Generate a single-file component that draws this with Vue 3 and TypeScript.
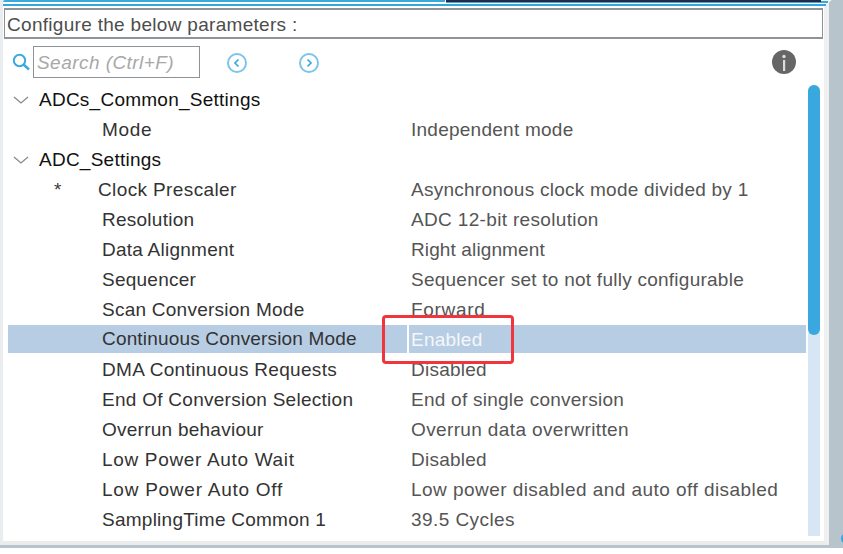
<script setup lang="ts">
interface Row {
  name: string
  value?: string
  kind?: 'group' | 'star'
  sel?: boolean
  nameTrack?: number
  valueTrack?: number
}
const rows: Row[] = [
  { name: 'ADCs_Common_Settings', kind: 'group' },
  { name: 'Mode', value: 'Independent mode', nameTrack: 0.7 },
  { name: 'ADC_Settings', kind: 'group' },
  { name: 'Clock Prescaler', value: 'Asynchronous clock mode divided by 1', kind: 'star', nameTrack: 0.38 },
  { name: 'Resolution', value: 'ADC 12-bit resolution', valueTrack: 0.34 },
  { name: 'Data Alignment', value: 'Right alignment', valueTrack: 0.12 },
  { name: 'Sequencer', value: 'Sequencer set to not fully configurable' },
  { name: 'Scan Conversion Mode', value: 'Forward', valueTrack: 0.68 },
  { name: 'Continuous Conversion Mode', value: 'Enabled', sel: true, nameTrack: 0.17 },
  { name: 'DMA Continuous Requests', value: 'Disabled', nameTrack: 0.3 },
  { name: 'End Of Conversion Selection', value: 'End of single conversion', nameTrack: 0.27 },
  { name: 'Overrun behaviour', value: 'Overrun data overwritten', valueTrack: 0.37 },
  { name: 'Low Power Auto Wait', value: 'Disabled', nameTrack: 0.67 },
  { name: 'Low Power Auto Off', value: 'Low power disabled and auto off disabled', nameTrack: 0.75, valueTrack: 0.45 },
  { name: 'SamplingTime Common 1', value: '39.5 Cycles', valueTrack: 0.43 }
]
const track = (n?: number) => (n === undefined ? undefined : { letterSpacing: n + 'px' })
</script>

<template>
  <div class="page">
    <div class="panel">
      <div class="topstrip">
        <div class="strip-left"></div>
        <div class="strip-right"></div>
      </div>
      <div class="topline"></div>
      <div class="heading">Configure the below parameters :</div>
      <div class="toolbar">
        <svg class="search-icon" width="18" height="18" viewBox="0 0 18 18">
          <circle cx="7.5" cy="7.5" r="5.7" fill="none" stroke="#3aa9de" stroke-width="2" />
          <path d="M11.5 11.5l5.5 5" stroke="#3aa9de" stroke-width="2.4" fill="none" />
        </svg>
        <div class="search">Search (Ctrl+F)</div>
        <svg class="nav first" width="22" height="22" viewBox="0 0 22 22">
          <circle cx="11" cy="11" r="9" fill="none" stroke="#7cc4ea" stroke-width="2" />
          <path d="M12.5 7.5L9 11l3.5 3.5" fill="none" stroke="#3aa9de" stroke-width="1.7" />
        </svg>
        <svg class="nav" width="22" height="22" viewBox="0 0 22 22">
          <circle cx="11" cy="11" r="9" fill="none" stroke="#7cc4ea" stroke-width="2" />
          <path d="M9.5 7.5L13 11l-3.5 3.5" fill="none" stroke="#3aa9de" stroke-width="1.7" />
        </svg>
        <svg class="info" width="24" height="24" viewBox="0 0 24 24">
          <circle cx="12" cy="12" r="12" fill="#666" />
          <rect x="11" y="10" width="2.2" height="11" fill="#ddd" />
          <circle cx="12" cy="6.5" r="1.7" fill="#ddd" />
        </svg>
      </div>
      <div class="body">
        <div class="tree">
          <div v-for="r in rows" :key="r.name" class="row" :class="{ sel: r.sel, group: r.kind === 'group' }">
            <template v-if="r.kind === 'group'">
              <svg class="chev" width="16" height="10" viewBox="0 0 16 10">
                <path d="M1 2l7 6 7-6" fill="none" stroke="#8a8a8a" stroke-width="1.3" />
              </svg>
              <span class="group-name">{{ r.name }}</span>
            </template>
            <template v-else>
              <span class="star">{{ r.kind === 'star' ? '*' : '' }}</span>
              <span class="name" :class="{ starred: r.kind === 'star' }" :style="track(r.nameTrack)">{{ r.name }}</span>
              <span class="value" :style="track(r.valueTrack)">{{ r.value }}</span>
            </template>
          </div>
        </div>
        <div class="scroll"><div class="thumb"></div></div>
      </div>
    </div>
    <div class="side"></div>
    <div class="dot"></div>
    <div class="mark"></div>
  </div>
</template>

<style>
html, body { margin: 0; background: #fff; }
</style>

<style scoped>
.page {
  width: 843px;
  height: 554px;
  position: relative;
  overflow: hidden;
  display: flex;
  align-items: flex-start;
  font-family: "Liberation Sans", Arial, sans-serif;
  background: #fff;
}
.panel {
  width: 829px;
  height: 545px;
  flex: none;
  box-sizing: border-box;
  background: #fff;
  border-left: 3px solid #e9edf0;
  border-right: 5px solid #f0f0f0;
  border-bottom: 4px solid #ebeded;
  box-shadow: 0 3px 0 #b8c4cb;
}
.side {
  width: 14px;
  height: 548px;
  flex: none;
  background: #b8c4cb;
  border-top-left-radius: 4px;
}
.topstrip {
  display: flex;
  height: 3px;
  width: 824px;
}
.strip-left {
  width: 442px;
  height: 2px;
  background: #39a8dd;
  border-top-left-radius: 2px;
}
.strip-right {
  width: 375px;
  height: 2px;
  margin-left: 1px;
  background: #1d2c4a;
  box-shadow: 0 1px 0 #39a8dd, 7px 1px 0 #39a8dd;
}
.topline {
  height: 2px;
  margin-top: 1px;
  margin-right: -2px;
  background: #34a6dc;
}
.heading {
  margin: 2px 1px 0 1px;
  height: 31px;
  box-sizing: border-box;
  border: 1px solid #8f9296;
  border-top-width: 2px;
  border-bottom-width: 2px;
  font-size: 19px;
  line-height: 29px;
  padding-left: 2px;
  color: #4d4d4d;
  letter-spacing: 0.3px;
  white-space: nowrap;
}
.toolbar {
  display: flex;
  align-items: center;
  height: 33px;
  margin-top: 6px;
  padding-left: 9px;
}
.search {
  width: 167px;
  height: 32px;
  box-sizing: border-box;
  border: 1px solid #8f9296;
  margin-left: 3px;
  font-style: italic;
  font-size: 19px;
  line-height: 32px;
  padding-left: 3px;
  color: #a8a8a8;
  letter-spacing: 0.45px;
  white-space: nowrap;
}
.nav { margin: 2px 0 0 50px; }
.nav.first { margin-left: 26px; }
.info { margin-left: 452px; }
.body { display: flex; margin-top: 7px; }
.tree { width: 798px; margin-left: 5px; margin-top: -1px; }
.row {
  height: 30px;
  box-sizing: border-box;
  padding-top: 1px;
  display: flex;
  align-items: center;
  font-size: 19px;
  white-space: nowrap;
  color: #3c3c3c;
  letter-spacing: 0.25px;
}
.row.sel { background: #b7cde4; height: 28px; margin: 1px 0; padding-top: 0; }
.chev { margin-left: 5px; }
.group-name { margin-left: 10px; color: #111; }
.star { width: 44px; padding-left: 46px; flex: none; }
.name { width: 309px; margin-left: 4px; flex: none; color: #333; }
.name.starred { margin-left: 0; width: 313px; }
.value { color: #555; }
.row.sel .value {
  color: #f4f7fb;
  border-left: 2px solid #fff;
  padding-left: 2px;
  margin-left: -4px;
  height: 28px;
  line-height: 29px;
}
.scroll {
  width: 12px;
  height: 451px;
  margin-left: 2px;
  background: #d6e6f4;
  border-radius: 6px 6px 0 0;
}
.thumb { height: 250px; background: #38a8de; border-radius: 6px; }
.dot {
  position: absolute;
  left: 841px;
  top: 533px;
  width: 11px;
  height: 11px;
  border-radius: 50%;
  background: #38a8de;
}
.mark {
  position: absolute;
  left: 382px;
  top: 315px;
  width: 132px;
  height: 49px;
  box-sizing: border-box;
  border: 3px solid #f0353c;
  border-radius: 4px;
}
</style>
